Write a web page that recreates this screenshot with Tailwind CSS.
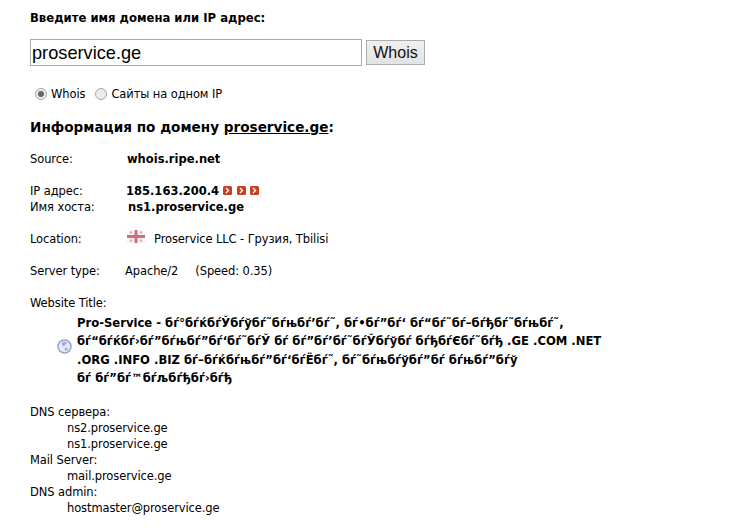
<!doctype html>
<html lang="ru">
<head>
<meta charset="UTF-8" />
<title>Whois</title>
<script src="https://cdn.jsdelivr.net/npm/@tailwindcss/browser@4"></script>
</head>
<body class="bg-white text-black font-['DejaVu_Sans',Verdana,sans-serif] text-[11.5px] tracking-[-0.1px] leading-[16px]">
<div class="pl-[30px] pt-[10px] w-[755px] h-[528px] overflow-hidden">
	<form>
		<div class="font-bold text-[11.65px] tracking-normal">Введите имя домена или IP адрес:</div>
		<div class="flex items-center gap-[4px] mt-[13px] tracking-normal">
			<div class="w-[332px] h-[27px] border border-[#a9a9a9] pl-[1px] font-['Liberation_Sans',Arial,sans-serif] text-[18.2px] leading-[27px]">proservice.ge</div>
			<div class="w-[59px] h-[25px] border border-[#acacac] bg-gradient-to-b from-[#f0f0f0] to-[#e3e3e3] text-center font-['Liberation_Sans',Arial,sans-serif] text-[16px] leading-[24px] text-[#111]">Whois</div>
		</div>
		<div class="flex items-center mt-[20px] pl-[5px] h-[16px]">
			<span class="flex items-center justify-center w-[12px] h-[12px] rounded-full border border-[#a6a6a6] bg-[#ececec]"><span class="w-[6px] h-[6px] rounded-full bg-[#666]"></span></span>
			<span class="ml-[4px]">Whois</span>
			<span class="ml-[10px] w-[12px] h-[12px] rounded-full border border-[#a6a6a6] bg-[#ececec]"></span>
			<span class="ml-[4px]">Сайты на одном IP</span>
		</div>
	</form>
	<h2 class="mt-[16px] font-bold text-[13.6px] tracking-normal leading-[18px]">Информация по домену <u>proservice.ge</u>:</h2>

	<div class="flex mt-[15px]"><span class="w-[97px]">Source:</span><b class="tracking-normal">whois.ripe.net</b></div>
	<div class="flex mt-[16px]">
		<span class="w-[96px]">IP адрес:</span><b class="tracking-normal">185.163.200.4</b>
		<span class="flex items-center gap-[4.500px] ml-[4px] -mt-[1px]">
			<svg class="w-[9px] h-[9px]" viewBox="0 0 9 9"><rect width="9" height="9" rx="1.5" fill="#c8401f"/><path d="M3 2l2.5 2.5L3 7" fill="none" stroke="#fff" stroke-width="1.4"/></svg>
			<svg class="w-[9px] h-[9px]" viewBox="0 0 9 9"><rect width="9" height="9" rx="1.5" fill="#c8401f"/><path d="M3 2l2.5 2.5L3 7" fill="none" stroke="#fff" stroke-width="1.4"/></svg>
			<svg class="w-[9px] h-[9px]" viewBox="0 0 9 9"><rect width="9" height="9" rx="1.5" fill="#c8401f"/><path d="M3 2l2.5 2.5L3 7" fill="none" stroke="#fff" stroke-width="1.4"/></svg>
		</span>
	</div>
	<div class="flex"><span class="w-[98px]">Имя хоста:</span><b class="tracking-normal">ns1.proservice.ge</b></div>
	<div class="flex mt-[16px]">
		<span class="w-[97px]">Location:</span>
		<svg class="w-[18px] h-[13px] -mt-[1px]" viewBox="0 0 18 13"><rect width="18" height="13" fill="#f6f2f2"/><rect x="7.5" width="3" height="13" fill="#c9707a"/><rect y="5" width="18" height="3" fill="#c9707a"/><g fill="#dca0a6"><rect x="3" y="1.5" width="2" height="2"/><rect x="13" y="1.5" width="2" height="2"/><rect x="3" y="9.5" width="2" height="2"/><rect x="13" y="9.5" width="2" height="2"/></g></svg>
		<span class="ml-[9px]">Proservice LLC - Грузия, Tbilisi</span>
	</div>
	<div class="flex mt-[16px]"><span class="w-[95px]">Server type:</span><span>Apache/2</span><span class="ml-[17px]">(Speed: 0.35)</span></div>
	<div class="mt-[16px]">Website Title:</div>
	<div class="flex mt-[3px] pl-[27px]">
		<svg class="w-[15px] h-[15px] shrink-0 mt-[25px]" viewBox="0 0 15 15"><circle cx="7.5" cy="7.5" r="6.5" fill="#e6e9f6" stroke="#9aa2d2" stroke-width="1.5"/><path d="M5 3.5c2-1 4-.8 5 .3-.5 1.6-1.5 1-2 2.2-.4 1.600-1.400 1.600-2.200 .8C5 6 4.500 5 5 3.500zM8 9c1-.4 2.500-.2 3 .5-.4 1.400-1.500 2.200-2.500 2.500C8 11 7.500 10 8 9z" fill="#a3abd8"/></svg>
		<b class="ml-[5px] leading-[18.3px] whitespace-nowrap text-[11.6px] tracking-normal">Pro-Service - бѓ°бѓќбѓЎбѓўбѓ˜бѓњбѓ’бѓ˜, бѓ•бѓ”бѓ‘ бѓ“бѓ˜бѓ–бѓђбѓ˜бѓњбѓ˜,<br>бѓ“бѓќбѓ›бѓ”бѓњбѓ”бѓ‘бѓ˜бѓЎ бѓ бѓ”бѓ’бѓ˜бѓЎбѓўбѓ бѓђбѓЄбѓ˜бѓђ .GE .COM .NET<br>.ORG .INFO .BIZ бѓ–бѓќбѓњбѓ”бѓ‘бѓЁбѓ˜, бѓ˜бѓњбѓўбѓ”бѓ бѓњбѓ”бѓў<br>бѓ бѓ”бѓ™бѓљбѓђбѓ›бѓђ</b>
	</div>
	<div class="mt-[17px]">DNS сервера:</div>
	<div class="pl-[37px]">ns2.proservice.ge</div>
	<div class="pl-[37px]">ns1.proservice.ge</div>
	<div>Mail Server:</div>
	<div class="pl-[37px]">mail.proservice.ge</div>
	<div>DNS admin:</div>
	<div class="pl-[37px]">hostmaster@proservice.ge</div>
</div>
</body>
</html>
